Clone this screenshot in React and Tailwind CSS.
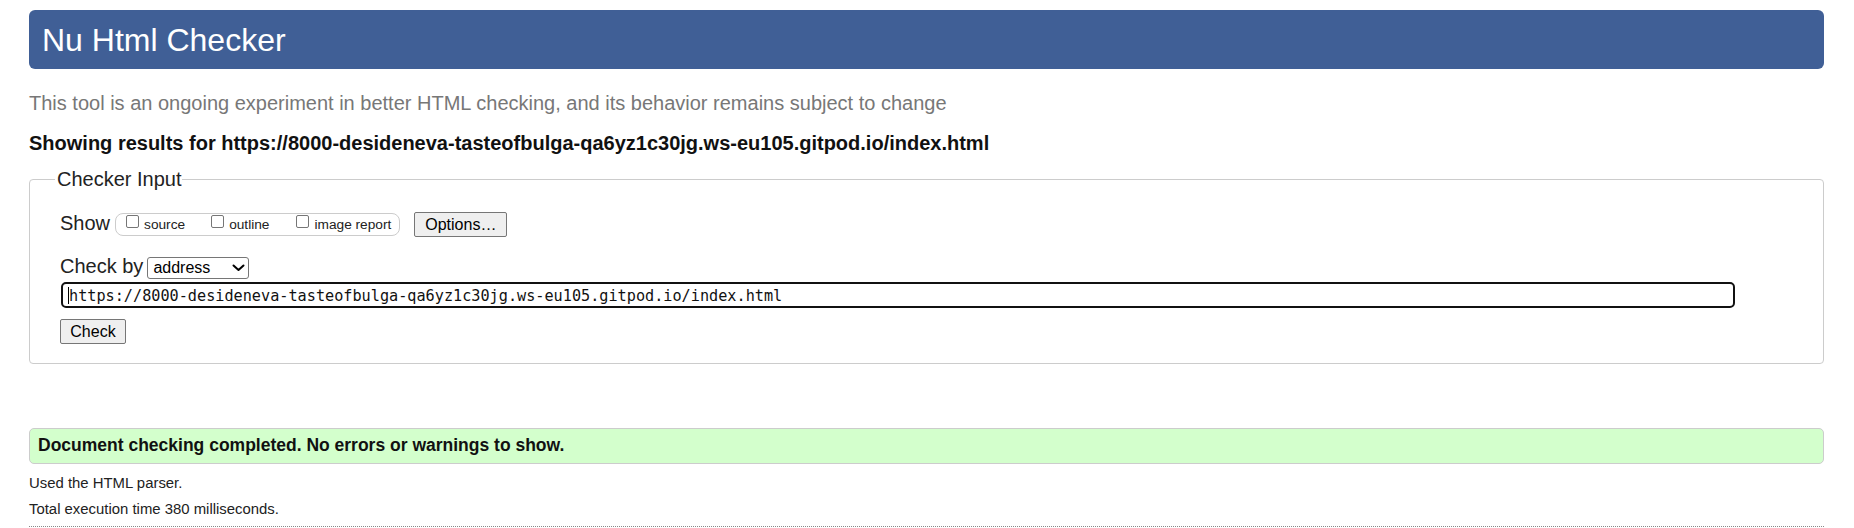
import React from "react";

function Box({ className = "" }) {
  return (
    <span
      className={
        "inline-block w-[13px] h-[13px] shrink-0 border border-[#767676] rounded-[2px] bg-white " +
        className
      }
    />
  );
}

export default function App() {
  return (
    <div className="min-h-[528px] bg-white pl-[29px] pr-[30px] pt-[10px] font-['Liberation_Sans',Arial,sans-serif] text-black">
      <h1 className="h-[59px] rounded-[6px] bg-[#405f96] flex items-center pl-[13px] text-[32px] leading-none text-white font-normal">
        Nu Html Checker
      </h1>

      <p className="mt-[22px] text-[20px] leading-[24px] text-[#777777]">
        This tool is an ongoing experiment in better HTML checking, and its behavior remains subject to change
      </p>

      <p className="mt-[16px] text-[20px] leading-[24px] font-bold text-[#111111]">
        Showing results for https://8000-desideneva-tasteofbulga-qa6yz1c30jg.ws-eu105.gitpod.io/index.html
      </p>

      <fieldset className="mt-[12px] border border-[#cccccc] rounded-[4px] pl-[30px] pr-[30px] pt-[20px] pb-[19px]">
        <legend className="-ml-[5px] pl-[2px] pr-0 text-[20px] leading-[24px] text-[#222222]">
          Checker Input
        </legend>

        <div className="flex items-start">
          <span className="text-[20px] leading-[24px] text-[#222222]">Show</span>
          <div className="ml-[5px] mt-[2px] h-[23px] border border-[#cccccc] rounded-[8px] flex items-start pl-[10px] pr-[8px]">
            <label className="flex items-start">
              <Box className="mt-[1px]" />
              <span className="ml-[5px] mt-[3px] text-[13.7px] leading-[16px] text-[#222222]">source</span>
            </label>
            <label className="flex items-start ml-[26px]">
              <Box className="mt-[1px]" />
              <span className="ml-[5px] mt-[3px] text-[13.7px] leading-[16px] text-[#222222]">outline</span>
            </label>
            <label className="flex items-start ml-[27px]">
              <Box className="mt-[1px]" />
              <span className="ml-[5px] mt-[3px] text-[13.7px] leading-[16px] text-[#222222]">image report</span>
            </label>
          </div>
          <button
            type="button"
            className="ml-[14px] mt-[1px] h-[25px] w-[93px] flex items-center justify-center border border-[#767676] rounded-[2px] bg-[#efefef] text-[16px] leading-none text-black"
          >
            Options…
          </button>
        </div>

        <div className="mt-[17px] flex items-start">
          <span className="text-[20px] leading-[24px] text-[#222222]">Check by</span>
          <div className="ml-[4px] mt-[3px] h-[22px] w-[102px] border border-[#767676] rounded-[3px] bg-white flex items-center justify-between pl-[5px] pr-[3px]">
            <span className="text-[16px] leading-none text-black">address</span>
            <svg width="13" height="8" viewBox="0 0 13 8" fill="none">
              <polyline points="1.5,1.5 6.5,6 11.5,1.5" stroke="#000" strokeWidth="2" strokeLinecap="round" strokeLinejoin="round" />
            </svg>
          </div>
        </div>

        <div className="mt-[3px] ml-[1px] h-[26px] w-[1674px] border-2 border-[#111111] rounded-[5px] bg-white flex items-center pl-[5px] pt-[4px] font-['DejaVu_Sans_Mono',monospace] text-[15.2px] leading-none text-[#111111] whitespace-nowrap overflow-hidden">
          <span className="inline-block w-[1px] h-[17px] bg-black -mt-[3px]" />
          <span>https://8000-desideneva-tasteofbulga-qa6yz1c30jg.ws-eu105.gitpod.io/index.html</span>
        </div>

        <button
          type="button"
          className="mt-[11px] h-[25px] w-[66px] flex items-center justify-center border border-[#767676] rounded-[2px] bg-[#efefef] text-[16px] leading-none text-black"
        >
          Check
        </button>
      </fieldset>

      <div className="mt-[64px] h-[36px] border border-[#cccccc] rounded-[5px] bg-[#d3ffcc] flex items-center pl-[8px] pb-[2px]">
        <p className="text-[17.5px] leading-[20px] font-bold text-[#111111]">
          Document checking completed. No errors or warnings to show.
        </p>
      </div>

      <p className="mt-[7px] text-[14.9px] leading-[25px] text-[#222222]">Used the HTML parser.</p>
      <p className="mt-[1px] text-[14.9px] leading-[25px] text-[#222222]">Total execution time 380 milliseconds.</p>

      <hr className="mt-[4px] border-0 border-t border-dotted border-[#888888]" />
    </div>
  );
}
